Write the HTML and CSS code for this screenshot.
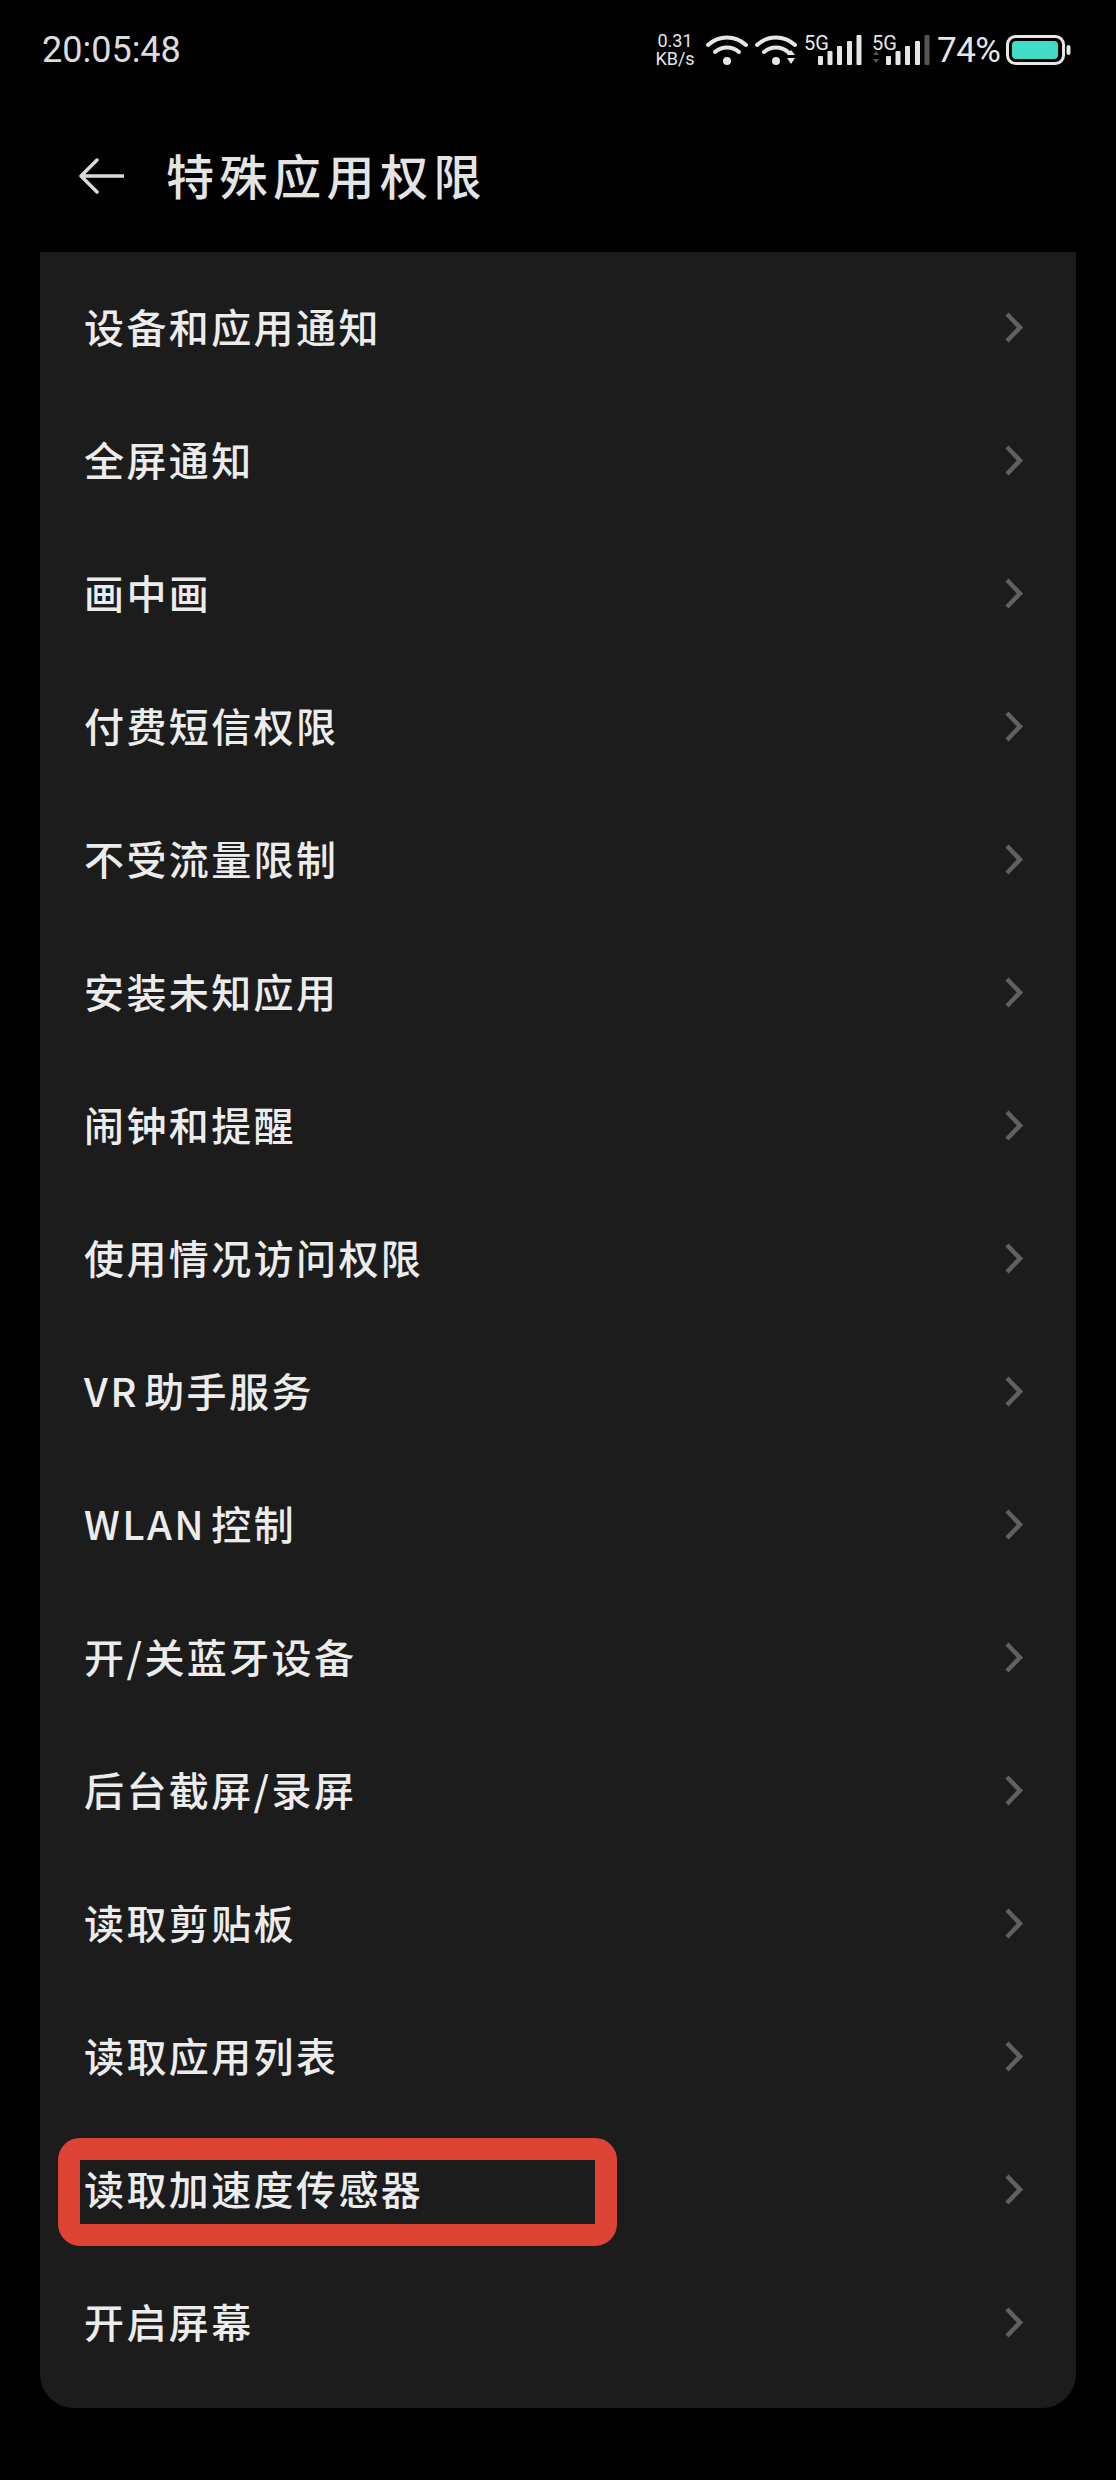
FILE: index.html
```html
<!DOCTYPE html>
<html lang="zh-CN">
<head>
<meta charset="utf-8">
<title>特殊应用权限</title>
<link rel="stylesheet" href="styles.css">
</head>
<body>
<div class="status">
  <span class="time">20:05:48</span>
  <div class="status-right">
    <div class="speed"><span>0.31</span><span>KB/s</span></div>
    <svg class="wifi" viewBox="0 0 42 30"><g fill="none" stroke="#e6e6e6" stroke-width="4" stroke-linecap="round"><path d="M2 10C13 0 29 0 40 10"/><path d="M9 17C16 11 26 11 33 17"/></g><circle cx="21" cy="26" r="4" fill="#e6e6e6"/></svg>
    <svg class="wifi wifi-two" viewBox="0 0 42 30"><g fill="none" stroke="#e6e6e6" stroke-width="4" stroke-linecap="round"><path d="M2 10C13 0 29 0 40 10"/><path d="M9 17C16 11 26 11 33 17"/></g><circle cx="21" cy="26" r="4" fill="#e6e6e6"/><path d="M32 20l4-5 4 5zM32 23h8l-4 6z" fill="#e6e6e6"/></svg>
    <div class="signal"><span class="sig-text">5G</span><svg class="bars" viewBox="0 0 58 31"><g fill="#e6e6e6"><rect x="14" y="21" width="5" height="9" rx="1"/><rect x="23.500" y="16" width="5" height="14" rx="1"/><rect x="33" y="11" width="5" height="19" rx="1"/><rect x="43" y="6" width="5" height="24" rx="1"/><rect x="52.500" y="0" width="5" height="30" rx="1"/></g></svg></div>
    <div class="signal signal-two"><span class="sig-text">5G</span><svg class="bars" viewBox="0 0 58 31"><path d="M1 20l3-4 3 4zM1 24h6l-3 4z" fill="#555"/><g fill="#e6e6e6"><rect x="14" y="21" width="5" height="9" rx="1"/><rect x="23.500" y="16" width="5" height="14" rx="1"/><rect x="33" y="11" width="5" height="19" rx="1"/><rect x="43" y="6" width="5" height="24" rx="1"/></g><rect x="52.500" y="0" width="5" height="30" rx="1" fill="#555"/></svg></div>
    <span class="pct">74%</span>
    <svg class="battery" viewBox="0 0 65 30"><rect x="1.500" y="1.500" width="56" height="27" rx="8" fill="none" stroke="#e6e6e6" stroke-width="3"/><rect x="6" y="6" width="46" height="18" rx="4" fill="#40dcc8"/><rect x="60.500" y="10" width="4" height="10" rx="2" fill="#e6e6e6"/></svg>
  </div>
</div>
<header class="topbar">
  <svg class="back" viewBox="0 0 46 36"><path d="M45 18H3M19 2L3 18l16 16" fill="none" stroke="#dcdcdc" stroke-width="3.500" stroke-linecap="round" stroke-linejoin="round"/></svg>
  <h1 class="title">特殊应用权限</h1>
</header>
<main class="card">
  <div class="row"><span class="label">设备和应用通知</span><svg class="chev" viewBox="0 0 20 33"><path d="M3 3l13 13.500L3 30" fill="none" stroke="#606060" stroke-width="4.500"/></svg></div>
  <div class="row"><span class="label">全屏通知</span><svg class="chev" viewBox="0 0 20 33"><path d="M3 3l13 13.500L3 30" fill="none" stroke="#606060" stroke-width="4.500"/></svg></div>
  <div class="row"><span class="label">画中画</span><svg class="chev" viewBox="0 0 20 33"><path d="M3 3l13 13.500L3 30" fill="none" stroke="#606060" stroke-width="4.500"/></svg></div>
  <div class="row"><span class="label">付费短信权限</span><svg class="chev" viewBox="0 0 20 33"><path d="M3 3l13 13.500L3 30" fill="none" stroke="#606060" stroke-width="4.500"/></svg></div>
  <div class="row"><span class="label">不受流量限制</span><svg class="chev" viewBox="0 0 20 33"><path d="M3 3l13 13.500L3 30" fill="none" stroke="#606060" stroke-width="4.500"/></svg></div>
  <div class="row"><span class="label">安装未知应用</span><svg class="chev" viewBox="0 0 20 33"><path d="M3 3l13 13.500L3 30" fill="none" stroke="#606060" stroke-width="4.500"/></svg></div>
  <div class="row"><span class="label">闹钟和提醒</span><svg class="chev" viewBox="0 0 20 33"><path d="M3 3l13 13.500L3 30" fill="none" stroke="#606060" stroke-width="4.500"/></svg></div>
  <div class="row"><span class="label">使用情况访问权限</span><svg class="chev" viewBox="0 0 20 33"><path d="M3 3l13 13.500L3 30" fill="none" stroke="#606060" stroke-width="4.500"/></svg></div>
  <div class="row"><span class="label">VR 助手服务</span><svg class="chev" viewBox="0 0 20 33"><path d="M3 3l13 13.500L3 30" fill="none" stroke="#606060" stroke-width="4.500"/></svg></div>
  <div class="row"><span class="label">WLAN 控制</span><svg class="chev" viewBox="0 0 20 33"><path d="M3 3l13 13.500L3 30" fill="none" stroke="#606060" stroke-width="4.500"/></svg></div>
  <div class="row"><span class="label">开/关蓝牙设备</span><svg class="chev" viewBox="0 0 20 33"><path d="M3 3l13 13.500L3 30" fill="none" stroke="#606060" stroke-width="4.500"/></svg></div>
  <div class="row"><span class="label">后台截屏/录屏</span><svg class="chev" viewBox="0 0 20 33"><path d="M3 3l13 13.500L3 30" fill="none" stroke="#606060" stroke-width="4.500"/></svg></div>
  <div class="row"><span class="label">读取剪贴板</span><svg class="chev" viewBox="0 0 20 33"><path d="M3 3l13 13.500L3 30" fill="none" stroke="#606060" stroke-width="4.500"/></svg></div>
  <div class="row"><span class="label">读取应用列表</span><svg class="chev" viewBox="0 0 20 33"><path d="M3 3l13 13.500L3 30" fill="none" stroke="#606060" stroke-width="4.500"/></svg></div>
  <div class="row"><span class="mark"></span><span class="label">读取加速度传感器</span><svg class="chev" viewBox="0 0 20 33"><path d="M3 3l13 13.500L3 30" fill="none" stroke="#606060" stroke-width="4.500"/></svg></div>
  <div class="row"><span class="label">开启屏幕</span><svg class="chev" viewBox="0 0 20 33"><path d="M3 3l13 13.500L3 30" fill="none" stroke="#606060" stroke-width="4.500"/></svg></div>
</main>
</body>
</html>
```
FILE: styles.css
```css
* { box-sizing: border-box; }
html, body { margin: 0; padding: 0; background: #000; }
body {
  width: 1116px;
  height: 2480px;
  overflow: hidden;
  color: #e8e8e8;
  font-family: "Noto Sans CJK SC", "Noto Sans", sans-serif;
}
.status {
  height: 100px;
  padding: 0 45px 0 42px;
  display: flex;
  align-items: center;
  justify-content: space-between;
}
.time {
  font-family: Roboto, sans-serif;
  font-size: 36px;
  color: #dcdcdc;
  line-height: 1;
}
.status-right {
  display: flex;
  align-items: center;
  color: #e6e6e6;
  font-family: Roboto, sans-serif;
}
.speed {
  display: flex;
  flex-direction: column;
  align-items: center;
  width: 42px;
  font-size: 18px;
  line-height: 18px;
  margin-right: 10px;
}
.wifi { width: 42px; height: 30px; margin-right: 7px; }
.signal {
  position: relative;
  width: 58px;
  height: 31px;
  margin-right: 10px;
}
.signal-two { margin-right: 7px; }
.bars { display: block; width: 58px; height: 31px; }
.sig-text {
  position: absolute;
  left: 0;
  top: 0;
  font-size: 20px;
  line-height: 16px;
  color: #e6e6e6;
}
.pct { font-size: 35px; letter-spacing: -0.5px; line-height: 1; width: 69px; }
.battery { width: 65px; height: 30px; }
.topbar {
  height: 152px;
  padding: 0 0 0 78px;
  display: flex;
  align-items: center;
}
.back { width: 46px; height: 36px; margin-right: 42px; flex: none; }
.title {
  margin: 0 0 4px;
  font-size: 48px;
  font-weight: 500;
  letter-spacing: 5.500px;
  color: #e4e4e4;
  line-height: 1;
}
.card {
  margin: 0 40px;
  height: 2156px;
  padding: 10px 0 0;
  background: #1c1c1c;
  border-radius: 0 0 34px 34px;
}
.row {
  position: relative;
  height: 133px;
  padding: 0 52px 2px 44px;
  display: flex;
  align-items: center;
  justify-content: space-between;
}
.label {
  position: relative;
  margin-bottom: 4px;
  font-size: 40px;
  font-weight: 500;
  letter-spacing: 2.400px;
  word-spacing: -6px;
  line-height: 1;
  color: #ececec;
}
.chev { width: 20px; height: 33px; flex: none; }
.mark {
  position: absolute;
  left: 18px;
  top: 14px;
  width: 559px;
  height: 108px;
  border: 22px solid #dd4436;
  border-radius: 22px;
}
```
